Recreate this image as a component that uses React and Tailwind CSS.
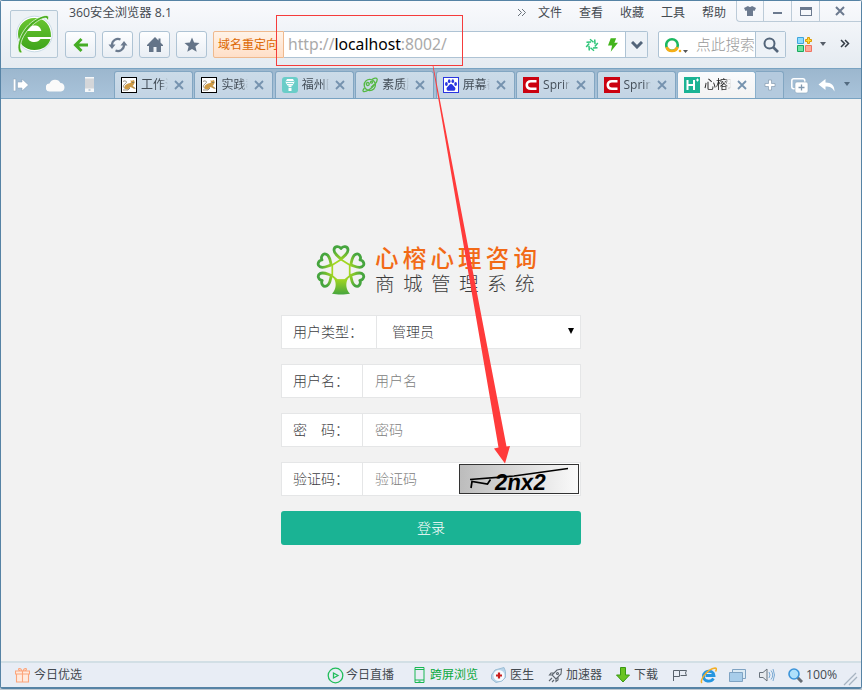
import React from "react";

const ui = "font-['Open_Sans','Noto_Sans_CJK_SC',sans-serif]";

const ELogo = () => (
  <svg width="40" height="42" viewBox="0 0 40 42">
    <defs>
      <linearGradient id="e" x1="0" y1="0" x2="0" y2="1">
        <stop offset="0" stopColor="#69c52f" />
        <stop offset="1" stopColor="#3fa51c" />
      </linearGradient>
    </defs>
    <circle cx="20.500" cy="21" r="17.800" fill="#fff" stroke="#c9dbe6" />
    <path fill="url(#e)" fillRule="evenodd" d="M20.500 5C11 5 4 12 4 21s6.500 16 16.500 16c8 0 14-4 16-11h-10c-1.500 2-3 3-6 3-4 0-6.500-2-7-5h23.500C37.500 12 30.500 5 20.500 5zM13.500 18c.8-3.500 3-5.500 7-5.500s6.200 2 6.800 5.500z" />
    <path d="M6 40C1 35 6 20 15 11.500 22 5 31 1 34 3c1.200.8.8 3-.5 5 0-2.500-1-3.200-3-2.800C25 6 16 13 11 21 6.500 28 5 35 8.500 39.500z" fill="#4aae20" stroke="#fff" strokeWidth=".7" />
  </svg>
);

const NavButton = ({ children }) => (
  <div className="mr-1.5 flex h-[27px] w-[31px] items-center justify-center rounded-[3px] border border-[#aec3d4] bg-linear-to-b from-[#fdfeff] to-[#e9eef4]">
    {children}
  </div>
);

const Close = () => (
  <svg width="10" height="10" viewBox="0 0 10 10" stroke="#7592ae" strokeWidth="1.800">
    <path d="M1 1l8 8M9 1L1 9" />
  </svg>
);

const Cat = () => (
  <svg width="16" height="16" viewBox="0 0 16 16">
    <rect x=".5" y=".5" width="15" height="15" fill="#fff" stroke="#000" />
    <path d="M4 12c-1.500-2 0-4 2-5 1.500-.8 3-.8 4-1.500L9.500 3l1.300.8L13 3l.8 2.500L12.500 8l-1 1 3 2.500-1.500.3L9.500 10 7 12.500z" fill="#cf9b45" />
    <path d="M2 4.500C4 3 7 4.500 4.500 6.500S1.800 10 3.500 11M2 13h5l2-2M11 5.500h2M12 9.500l2 2" stroke="#77705f" fill="none" strokeWidth=".8" />
  </svg>
);
const Lamp = () => (
  <svg width="16" height="16" viewBox="0 0 16 16">
    <rect width="16" height="16" rx="3" fill="#6acdc8" />
    <path d="M5 2h6l1.500 3-2 3.500H5.500L3.500 5z" fill="#fff" />
    <path d="M6.500 8.500h3V14h-3z" fill="#fff" />
    <path d="M4 4.500h8M5 6.500h6M6 10.500h4" stroke="#6acdc8" strokeWidth=".8" />
  </svg>
);
const Planet = () => (
  <svg width="16" height="16" viewBox="0 0 16 16" fill="none" stroke="#55b943" strokeWidth="1.300">
    <circle cx="7.800" cy="8" r="5.600" />
    <path d="M2.500 11C-1 15 2 16 7 12.800 12 9.500 16 4 15 1.800 14.500.5 12 1 10 2.500" />
    <circle cx="5.800" cy="7" r="1.500" />
    <circle cx="9.500" cy="5.200" r="1" />
    <path d="M9 10.500l3-3" />
  </svg>
);
const Paw = () => (
  <svg width="16" height="16" viewBox="0 0 16 16">
    <rect x=".5" y=".5" width="15" height="15" fill="#fff" stroke="#2a36e0" />
    <g fill="#2a36e0">
      <ellipse cx="3.400" cy="7" rx="1.400" ry="1.900" />
      <ellipse cx="6.200" cy="4.200" rx="1.300" ry="1.900" />
      <ellipse cx="9.800" cy="4.200" rx="1.300" ry="1.900" />
      <ellipse cx="12.600" cy="7" rx="1.400" ry="1.900" />
      <path d="M8 7c1.800 0 2.200 2 3.600 3 1.600 1.300.8 4-1.400 3.800-1.500-.2-2.900-.2-4.400 0-2.200.2-3-2.500-1.400-3.800C5.800 9 6.200 7 8 7z" />
    </g>
  </svg>
);
const CIcon = () => (
  <svg width="16" height="16" viewBox="0 0 16 16">
    <rect width="16" height="16" fill="#cb0210" />
    <path d="M13.500 4.300H8C5 4.300 3.800 6 3.800 8S5 11.700 8 11.700h5.500" fill="none" stroke="#fff" strokeWidth="2.600" />
  </svg>
);
const HIcon = () => (
  <svg width="16" height="16" viewBox="0 0 16 16">
    <rect width="16" height="16" fill="#1ab394" />
    <path d="M3.500 3v10M10 3v10M3.500 8H10" stroke="#fff" strokeWidth="2" />
    <path d="M13.500 1.500v3M12 3h3" stroke="#fff" strokeWidth="1" />
  </svg>
);

const tabs = [
  ["工作流", Cat], ["实践教", Cat], ["福州医", Lamp], ["素质服", Planet],
  ["屏幕截", Paw], ["Spring", CIcon], ["Spring", CIcon], ["心榕理", HIcon],
];

const Tab = ({ title, Icon, active }) => (
  <div
    className={
      "flex h-full w-[79px] shrink-0 items-center rounded-t-[3px] border border-b-0 pl-1.5 " +
      (active ? "border-[#8bb0cc] bg-linear-to-b from-[#fafbfd] to-[#f2f2f2] text-[#222]" : "border-[#82a6c2] bg-linear-to-b from-[#cbdbe8] to-[#c3d4e4] text-[#444e58]")
    }
  >
    <Icon />
    <span className="ml-1 h-[18px] w-[27px] overflow-hidden text-[12px] leading-[18px] whitespace-nowrap [mask-image:linear-gradient(90deg,#000_75%,transparent)]">{title}</span>
    <span className="ml-1.5"><Close /></span>
  </div>
);

const Row = ({ label, wide, placeholder, children }) => (
  <div className="mb-[15px] flex h-[34px] border border-[#e5e6e7] bg-white text-sm font-light text-[#3e4043]">
    <div className={"flex shrink-0 items-center border-r border-[#e5e6e7] pb-0.5 pl-[11px] whitespace-pre " + (wide ? "w-[95px]" : "w-[81px]")}>{label}</div>
    {placeholder && <div className="flex w-[95px] items-center pb-0.5 pl-3 text-[#808080]">{placeholder}</div>}
    {children}
  </div>
);

const HEART = "M0-11C-3-14-7-16-7-20-7-24-2-24.500 0-21.500 2-24.500 7-24 7-20 7-16 3-14 0-11z";
const Tree = () => (
  <svg width="50" height="52" viewBox="-25 -26 50 52">
    <defs>
      <radialGradient id="t" gradientUnits="userSpaceOnUse" cx="0" cy="0" r="25">
        <stop offset=".35" stopColor="#a5d820" />
        <stop offset=".85" stopColor="#46a53e" />
      </radialGradient>
      <linearGradient id="k" x1="0" y1="0" x2="0" y2="1">
        <stop offset="0" stopColor="#a5d820" />
        <stop offset="1" stopColor="#46a53e" />
      </linearGradient>
    </defs>
    <g fill="none" stroke="url(#t)" strokeWidth="2.800" strokeLinejoin="round">
      {[0, 62, 119, 241, 298].map((a) => (
        <path key={a} d={HEART} transform={`rotate(${a})`} />
      ))}
      <path d="M0-10.500L8.700-5V7M-8.700 7V-5L0-10.500M-8.700 6L-4 10H4L8.700 6" strokeWidth="1.700" />
    </g>
    <path d="M-7 8.500L-4 9.500H4L7 8.500C4.500 13 4.500 19 9 23.800c-5 1-13 1-18 0C-4.500 19-4.500 13-7 8.500z" fill="url(#k)" />
  </svg>
);

const Captcha = () => (
  <svg className="my-px h-[30px] w-[120px] shrink-0" viewBox="0 0 120 30">
    <defs>
      <linearGradient id="c">
        <stop offset="0" stopColor="#bcbcbc" />
        <stop offset="1" stopColor="#fafafa" />
      </linearGradient>
    </defs>
    <rect x=".5" y=".5" width="119" height="29" fill="url(#c)" stroke="#333" />
    <g fontFamily="Liberation Sans" fontWeight="700" fontSize="23">
      <text transform="translate(35 25.500) skewX(-8)" textLength="51" lengthAdjust="spacingAndGlyphs">2nx2</text>
    </g>
    <path d="M12 24l1-6.500 15.500 2.500 3-4.500M11 15.500L55 12 109 4.500" fill="none" stroke="#000" strokeWidth="1.700" />
  </svg>
);

const Status = ({ children, text, green, className = "" }) => (
  <div className={"flex items-center gap-0.5 whitespace-nowrap " + (green ? "text-[#08a83c] " : "") + className}>
    {children}
    <span>{text}</span>
  </div>
);

export default function App() {
  return (
    <div className={"relative flex h-[690px] w-[862px] flex-col overflow-hidden bg-[#bfc9d2] text-xs text-[#444a51] " + ui}>
      <div className="flex h-[689px] flex-col rounded-[3px] border border-b-2 border-[#5683a5] bg-[#f2f2f2]">
        <header className="flex h-[67px] shrink-0 bg-linear-to-b from-[#f9fafd] to-[#e5ebf1]">
          <div className="mt-[9px] ml-[9px] flex h-12 w-12 items-center justify-center rounded-[2px] border border-[#b5c8d6] bg-[#edf2f6]"><ELogo /></div>
          <div className="ml-[7px] flex-1">
            <div className="flex h-[21px]">
              <span className="ml-1 flex-1 pt-0.5 text-[12.300px] leading-[20px]">360安全浏览器 8.1</span>
              <div className="flex w-[219px] pt-0.5 leading-[20px]">
                <svg className="mt-[5px] mr-3 w-[9px]" height="9" viewBox="0 0 9 9" fill="none" stroke="#6a727b"><path d="M1 1l3.500 3.500L1 8M5 1l3.500 3.500L5 8" /></svg>
                <span className="w-[41px]">文件</span>
                <span className="w-[41px]">查看</span>
                <span className="w-[41px]">收藏</span>
                <span className="w-[41px]">工具</span>
                <span>帮助</span>
              </div>
              <div className="flex h-[21px] w-[125px] rounded-bl-[4px] border-b border-l border-[#bccbd8]">
                <div className="flex w-[27px] items-center justify-center border-r border-[#bccbd8]">
                  <svg width="12" height="12" viewBox="0 0 12 12" fill="#6c7a8f"><path d="M0 3l4-2q2 2 4 0l4 2-1.500 3L9 5.500V11H3V5.500L1.500 6z" /></svg>
                </div>
                <div className="flex w-7 items-center justify-center border-r border-[#bccbd8]"><div className="mt-1 h-0.5 w-[9px] bg-[#6c7a8f]" /></div>
                <div className="flex w-7 items-center justify-center border-r border-[#bccbd8]"><div className="h-[9px] w-[12px] border border-t-[3px] border-[#6c7a8f]" /></div>
                <div className="flex flex-1 items-center justify-center pr-0.5"><svg width="10" height="10" viewBox="0 0 10 10" stroke="#6c7a8f" strokeWidth="2"><path d="M1 1l8 8M9 1L1 9" /></svg></div>
              </div>
            </div>
            <div className="mt-[9px] flex h-[27px]">
              <NavButton><svg width="16" height="16" viewBox="0 0 16 16" fill="none" stroke="#45ad25" strokeWidth="3"><path d="M8.500 2L2.500 8l6 6M3 8h12" /></svg></NavButton>
              <NavButton>
                <svg width="20" height="18" viewBox="0 0 20 18">
                  <path d="M4 9A6 6 0 0 1 12.500 3.500M16 9A6 6 0 0 1 7.500 14.500" fill="none" stroke="#6b7a8e" strokeWidth="2.200" />
                  <path d="M.5 8.500h7L4 13zM12.500 9.500h7L16 5z" fill="#6b7a8e" />
                </svg>
              </NavButton>
              <NavButton><svg width="16" height="16" viewBox="0 0 16 16" fill="#647488"><path d="M8 0L0 8v1h2v6h4.500v-5h3v5H14V9h2V8l-2.500-2.500V1.500h-2v2z" /></svg></NavButton>
              <NavButton><svg width="16" height="16" viewBox="0 0 16 16" fill="#647488"><path d="M8 .5l2.100 5 5.400.4-4.100 3.500 1.300 5.300L8 11.900l-4.700 2.800 1.300-5.300L.5 5.900l5.400-.4z" /></svg></NavButton>
              <div className="flex w-[71px] items-center rounded-l-[2px] border border-[#efb98e] bg-linear-to-b from-[#fff3e8] to-[#ffdfc8] pl-1 whitespace-nowrap text-[#dc6803]">域名重定向</div>
              <div className="flex w-[364px] items-center rounded-r-[2px] border border-l-0 border-[#aec3d4] bg-white">
                <span className="w-[301px] pl-1 font-['Noto_Sans',sans-serif] text-[15.700px] text-[#aaa]">http://<span className="text-black">localhost</span>:8002/</span>
                <svg width="14" height="14" viewBox="0 0 14 14" fill="none" stroke="#2bc477" strokeWidth="1.500">
                  {[0, 45, 90, 135, 180, 225, 270, 315].map((a) => <path key={a} d="M5 1.200l3.500 3" transform={`rotate(${a} 7 7)`} />)}
                </svg>
                <svg className="ml-[9px]" width="10" height="14" viewBox="0 0 11 15" fill="#43b51c"><path d="M3 0h6L7 5h4L3 15l1.500-7H0z" /></svg>
                <div className="ml-auto flex h-full w-[22px] items-center justify-center border-l border-[#aec3d4] bg-[#edf2f7]">
                  <svg width="12" height="8" viewBox="0 0 12 8" fill="none" stroke="#53657a" strokeWidth="3"><path d="M1 1l5 5 5-5" /></svg>
                </div>
              </div>
              <div className="ml-2.5 flex w-[128px] items-center rounded-[2px] border border-[#aec3d4] bg-white">
                <svg className="ml-1.5 shrink-0" width="24" height="18" viewBox="0 0 24 18">
                  <circle cx="7" cy="9" r="5.800" fill="none" stroke="#1bb861" strokeWidth="2.600" />
                  <path d="M1.500 11a5.800 5.800 0 0 0 11 0" fill="none" stroke="#f6ae16" strokeWidth="2.600" />
                  <circle cx="15" cy="15" r="1.300" fill="#f6ae16" />
                  <path d="M18 14h5l-2.500 3z" fill="#555" />
                </svg>
                <span className="ml-[7px] w-[59px] shrink-0 text-[14.700px] font-light whitespace-nowrap text-[#999]">点此搜索</span>
                <div className="flex h-full flex-1 items-center justify-center border-l border-[#aec3d4] bg-[#edf2f7]">
                  <svg width="16" height="16" viewBox="0 0 16 16" fill="none" stroke="#53657a"><circle cx="6.500" cy="6.500" r="5" strokeWidth="2" /><path d="M10 10l5 5" strokeWidth="2.700" /></svg>
                </div>
              </div>
              <svg className="mt-1.5 ml-[11px]" width="16" height="16" viewBox="0 0 16 16">
                <path d="M.5.5h6v6h-6z" fill="#8edcff" stroke="#3fa5dc" />
                <path d="M.5 8.500h6v6h-6z" fill="#6ee3a0" stroke="#19a95e" />
                <path d="M8.500 8.500h6v6h-6z" fill="#ffa998" stroke="#ef7462" />
                <path d="M10.500.5h2v2h2v2h-2v2h-2v-2h-2v-2h2z" fill="#ffdb38" stroke="#dd9b05" />
              </svg>
              <svg className="mt-[11px] ml-[7px]" width="6" height="4"><path d="M0 0h6L3 4z" fill="#555d68" /></svg>
              <svg className="mt-2 ml-3.5" width="10" height="9" viewBox="0 0 10 9" fill="none" stroke="#333b45" strokeWidth="1.500"><path d="M1 1l3.500 3.500L1 8M5 1l3.500 3.500L5 8" /></svg>
            </div>
          </div>
        </header>

        <nav className="flex h-[31px] shrink-0 border-y border-[#79a3c2] bg-linear-to-b from-[#9cb7ce] to-[#a9c3da] pt-0.5">
          <div className="flex w-[113px] items-center gap-[17px] pl-3">
            <svg width="16" height="14" viewBox="0 0 16 14" fill="#fff" stroke="#859fb6" strokeWidth=".5"><path d="M.3 1h2.500v12H.3zM4.500 4H9V1l6.500 6L9 13v-3H4.500z" /></svg>
            <svg width="19" height="14" viewBox="0 0 19 14" fill="#fafafa"><path d="M4 13.500a4 4 0 0 1-.5-8A6 6 0 0 1 14.500 5 4.300 4.300 0 0 1 15 13.500z" /></svg>
            <svg className="ml-[3px]" width="9" height="15" viewBox="0 0 9 15"><path d="M0 0h9v15H0z" fill="#f6f8fa" /><path d="M0 1.500h9v10H0z" fill="#d4d6d9" /><path d="M3.500 13h2" stroke="#8ba4b9" /></svg>
          </div>
          <div className="flex w-[642px] justify-between">
            {tabs.map(([t, I], i) => <Tab key={i} title={t} Icon={I} active={i === 7} />)}
          </div>
          <div className="flex w-[28px] items-center justify-center rounded-tr-[3px] border-t border-r border-[#82a6c2] bg-[#b4cade]">
            <svg width="12" height="12" viewBox="0 0 12 12"><path d="M4.500 1h3v3.500H11v3H7.500V11h-3V7.500H1v-3h3.500z" fill="#fff" stroke="#849bb0" strokeWidth=".7" /></svg>
          </div>
          <svg className="mt-[7px] ml-[7px]" width="18" height="16" viewBox="0 0 18 16"><rect x=".8" y=".8" width="13" height="10" rx="2" fill="none" stroke="#fff" strokeWidth="1.500" /><rect x="4" y="4" width="13" height="11" rx="2" fill="#fff" stroke="#8ea7bd" strokeWidth=".6" /><path d="M10.500 6.500v6M7.500 9.500h6" stroke="#8199af" strokeWidth="1.300" /></svg>
          <svg className="mt-2 ml-[9px]" width="17" height="13" viewBox="0 0 16 13" fill="#fff"><path d="M0 5.500L7 0v3.500c6 0 9 3 9 9-2-4-4.500-5-9-5V11z" /></svg>
          <svg className="mt-[11px] ml-[9px]" width="6" height="4"><path d="M0 0h6L3 4z" fill="#536b80" /></svg>
        </nav>

        <main className="flex h-[562px] shrink-0 flex-col items-center pt-[145px]">
          <div className="flex h-[54px] w-[300px] pl-[35px]">
            <Tree />
            <div className="ml-[9px] pt-px whitespace-nowrap">
              <div className="h-[26px] text-[23.500px] leading-[26px] font-medium tracking-[4.200px] text-[#f26a16]">心榕心理咨询</div>
              <div className="text-[19.500px] leading-[25px] font-light tracking-[8.500px] text-[#3c3c3c]">商城管理系统</div>
            </div>
          </div>
          <div className="mt-[17px] w-[300px] font-['Noto_Sans_CJK_SC',sans-serif]">
            <Row label="用户类型：" wide>
              <div className="flex flex-1 items-center justify-between pr-1.5 pb-0.5 pl-[15px]">
                <span>管理员</span>
                <svg width="6" height="6"><path d="M0 0h6L3 6z" fill="#000" /></svg>
              </div>
            </Row>
            <Row label="用户名：" placeholder="用户名" />
            <Row label="密　码：" placeholder="密码" />
            <Row label="验证码：" placeholder="验证码">
              <div className="ml-px"><Captcha /></div>
            </Row>
            <button className="h-[34px] w-full rounded-[3px] bg-[#1ab394] pb-0.5 text-sm font-light text-white">登录</button>
          </div>
        </main>

        <footer className="flex h-[26px] shrink-0 items-center border-t-2 border-[#d2dfe5] bg-[#e8edf5] pl-3.5">
          <Status text="今日优选" className="w-[312px]">
            <svg className="mr-0.5" width="15" height="15" viewBox="0 0 15 15" fill="#ffeade" stroke="#fca57c" strokeWidth="1.100"><path d="M1.500 6h12v8h-12zM.5 3h14v3H.5zM7.500 3v11M7 3C3 3 3 .5 4.500.5S7 3 7 3zM8 3c4 0 4-2.500 2.500-2.500S8 3 8 3z" /></svg>
          </Status>
          <Status text="今日直播" className="w-[87px]">
            <svg width="17" height="17" viewBox="0 0 17 17" fill="none" stroke="#22bd5b" strokeWidth="1.300"><circle cx="8.500" cy="8.500" r="7.300" /><path d="M6.500 6l4.500 2.500L6.500 11z" /></svg>
          </Status>
          <Status text="跨屏浏览" green className="w-[77px]">
            <svg className="mr-[3px]" width="11" height="16" viewBox="0 0 11 16" fill="none" stroke="#19b753"><path d="M1 .5h9v15H1zM1 2.500h9M1 13h9M4.500 14.200h2" /></svg>
          </Status>
          <Status text="医生" className="w-[57px]">
            <svg className="mr-0.5" width="15" height="16" viewBox="0 0 15 16"><path d="M4 3l9-2.500 1.500 4v6L11 14l-6 1.500L.5 12V8z" fill="#b9d5ea" stroke="#9cbdd4" strokeLinejoin="round" /><circle cx="8" cy="8.500" r="5.500" fill="#f7fafd" /><path d="M8 5.500v6M5 8.500h6" stroke="#c91e1e" strokeWidth="2.200" /></svg>
          </Status>
          <Status text="加速器" className="w-[68px]">
            <svg className="mr-px" width="15" height="15" viewBox="0 0 15 15" fill="none" stroke="#5e666f" strokeWidth="1.100"><path d="M13.500 1L9 2 4 7l4 4 5-5zM6 5H3L1.500 7H4M10 9v3l-2 1.500V11M4 10l-3 3M6 12l-2 2" /><circle cx="9.500" cy="5.500" r="1" /></svg>
          </Status>
          <Status text="下载" className="w-[57px]">
            <svg className="mr-0.5" width="14" height="16" viewBox="0 0 14 16" fill="#69c320" stroke="#399812"><path d="M4.500.5h5V8h4L7 15 .5 8h4z" /></svg>
          </Status>
          <svg width="14" height="13" viewBox="0 0 14 13" fill="none" stroke="#59626c"><path d="M.5 12V1.500h6v6h-6M6.500 1.500h7l-1 2.500 1 2.500h-6" /></svg>
          <svg className="ml-[13px]" width="17" height="17" viewBox="0 0 17 17"><path d="M13.500 11.500c-2.500 4-10 3.500-10-2.500 0-6 10-6.500 10.500-.5H5.500" fill="none" stroke="#2696df" strokeWidth="2.800" /><path d="M2 16C-1 14 7 2 15 1c2 0 1.500 2 .5 3.500" fill="none" stroke="#f3af28" strokeWidth="1.500" /></svg>
          <svg className="ml-3" width="17" height="13" viewBox="0 0 17 13" stroke="#7fa3c3"><path d="M3.500.5h13v9h-13z" fill="#dcebf5" /><path d="M.5 3.500h13v9H.5z" fill="#a8cdea" /></svg>
          <svg className="ml-[13px]" width="16" height="14" viewBox="0 0 16 14" fill="none"><path d="M.5 4.500H4L8 1v12L4 9.500H.5z" fill="#e6e9ed" stroke="#69727c" /><path d="M10 4q2 3 0 6M12 2.500q3.500 4.500 0 9M14 1q3 6 0 12" stroke="#79a9d3" /></svg>
          <svg className="ml-[13px]" width="15" height="15" viewBox="0 0 15 15"><path d="M9.500 9.500L14 14" stroke="#666d75" strokeWidth="3" /><circle cx="6" cy="6" r="5" fill="#aee0fb" stroke="#3c94d9" strokeWidth="1.600" /></svg>
          <span className="ml-[3px] text-[12.300px]">100%</span>
          <svg className="mt-2 ml-1.5 shrink-0" width="15" height="14" viewBox="0 0 15 14" stroke="#a7b4c2" strokeWidth="1.300"><path d="M1 13L13 1M6 13l8-8" /></svg>
        </footer>
      </div>
      <svg className="pointer-events-none absolute inset-0" width="862" height="690">
        <rect x="276.500" y="15.500" width="186" height="50" fill="none" stroke="#f53c3c" />
        <path d="M432.500 65h.7L506.500 446.500l3.500-.5-5 17.500-11-15 4.500-1z" fill="#ff3b3b" />
      </svg>
    </div>
  );
}
